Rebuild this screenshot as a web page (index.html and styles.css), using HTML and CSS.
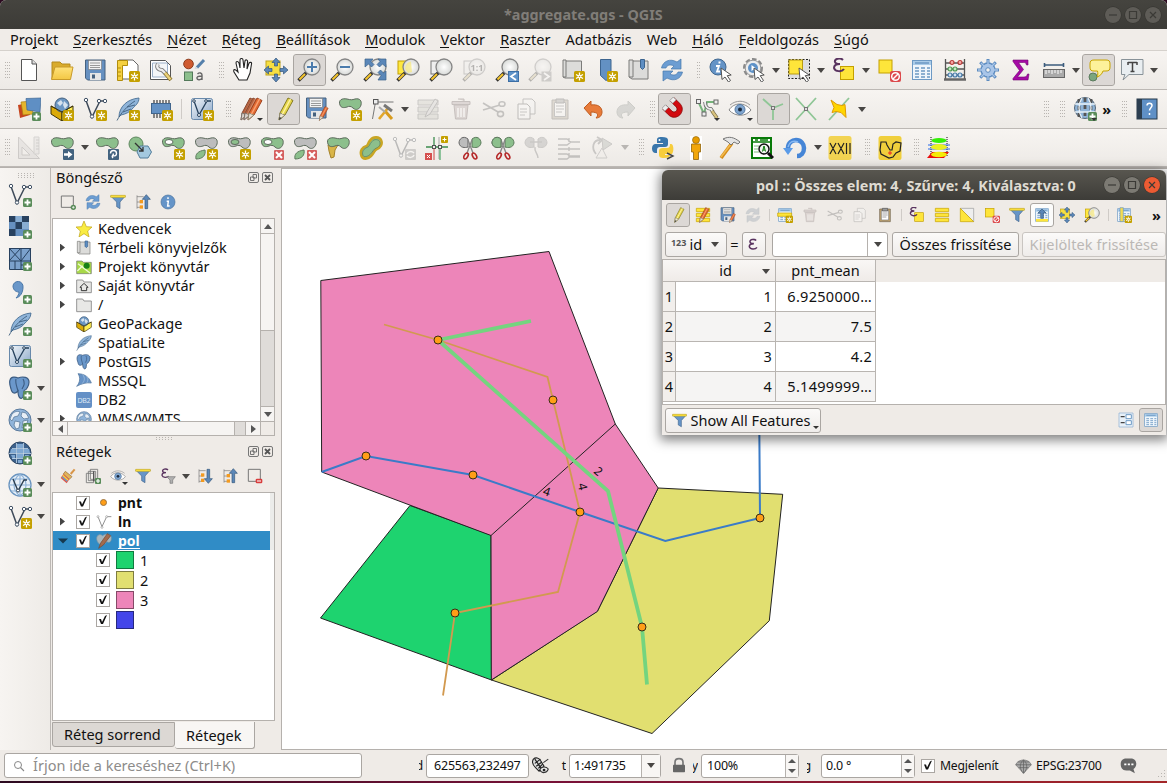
FILE: index.html
```html
<!DOCTYPE html>
<html lang="hu">
<head>
<meta charset="utf-8">
<title>*aggregate.qgs - QGIS</title>
<link rel="stylesheet" href="styles.css">
</head>
<body>
<svg class="defs" aria-hidden="true">
  <defs>
    <linearGradient id="gBlue" x1="0" y1="0" x2="1" y2="1"><stop offset="0" stop-color="#f4f7fa"/><stop offset="1" stop-color="#88a6c8"/></linearGradient>
    <radialGradient id="gLens"><stop offset="0" stop-color="#fff"/><stop offset="1" stop-color="#d8dad8"/></radialGradient>
    <linearGradient id="gFold" x1="0" y1="0" x2="0" y2="1"><stop offset="0" stop-color="#ffe27a"/><stop offset="1" stop-color="#f3c744"/></linearGradient>
  </defs>
  <!-- badges -->
  <symbol id="bn" viewBox="0 0 24 24"><rect x="13" y="13" width="11" height="11" rx="1.500" fill="#c4a000"/><path d="M18.500 14.500v8M15 16.500l7 4M22 16.500l-7 4" stroke="#fff" stroke-width="1.300"/><circle cx="18.500" cy="18.500" r="1.700" fill="#fff"/><circle cx="18.500" cy="18.500" r=".8" fill="#c4a000"/></symbol>
  <symbol id="bp" viewBox="0 0 24 24"><rect x="15" y="15" width="9" height="9" rx="1.500" fill="#5a8c5a"/><path d="M19.500 16.500v6M16.500 19.500h6" stroke="#fff" stroke-width="1.800"/></symbol>
  <symbol id="bx" viewBox="0 0 24 24"><rect x="14" y="14" width="10" height="10" rx="1" fill="#d5605f"/><path d="M16 16l6 6M22 16l-6 6" stroke="#fff" stroke-width="2"/></symbol>
  <symbol id="mag" viewBox="0 0 24 24"><path d="M1.500 22.500L10 14" stroke="#333" stroke-width="3.400"/><path d="M2.500 21.500L8 16" stroke="#f5c52c" stroke-width="2"/><circle cx="15" cy="9" r="8" fill="url(#gLens)" stroke="#858585" stroke-width="1.300"/></symbol>
  <symbol id="cur" viewBox="0 0 24 24"><path d="M12 10l1 11.500 3-2.500 3.500 5 2-1.500-3.300-4.800 4-.7z" fill="#fff" stroke="#555"/></symbol>
  <symbol id="blob" viewBox="0 0 24 24"><path d="M2 8C0 3 4 1 9 2c4 1 5 1 8 0 5-1 7 2 6 6-1 4-5 6-8 3-2-2-4-2-6-1-3 1-6 1-7-2z" stroke="#5d6b5d"/></symbol>
  <symbol id="vec" viewBox="0 0 24 24"><path d="M3 3.500L9 20l8-16M17 4h5" fill="none" stroke="#3f4b5a" stroke-width="1.500"/><g fill="#fff" stroke="#3f5064"><circle cx="3" cy="3" r="1.700"/><circle cx="9" cy="19.500" r="1.700"/><circle cx="16" cy="4" r="1.700"/><circle cx="22" cy="4" r="1.700"/></g></symbol>
  <symbol id="feather" viewBox="0 0 24 24"><path d="M3 20C3 10 11 2 23 1c0 5-4 8-6 10-3 4-7 6-12 7z" fill="#8fb4d9" stroke="#4a6f94" stroke-width=".9"/><path d="M1 23.500C5 16 11 9 19 4M7 15l8-3M11 10l8-2" fill="none" stroke="#3f607f" stroke-width=".9"/></symbol>
  <symbol id="globe" viewBox="0 0 24 24"><circle cx="12" cy="12" r="11" fill="#8fb4da" stroke="#5b7a9c"/><path d="M4 6c3-3 6-3 8-2l-2 4-4 1-2 4-2-2zM14 4l4 1 3 5-5 1-3-3zM7 13l5 1-1 6-3 1-2-4zM15 13l5-1-2 6-4 2z" fill="#e6eef6" stroke="#5d7c9c" stroke-width=".8"/></symbol>
  <symbol id="grid" viewBox="0 0 24 24"><circle cx="12" cy="12" r="11" fill="#e8f0f8" stroke="#6a94bf" stroke-width="1.300"/><path d="M1 12h22M3 6h18M3 18h18M12 1v22M12 1c-8 6-8 16 0 22M12 1c8 6 8 16 0 22" fill="none" stroke="#8ab0d6" stroke-width="1.100"/></symbol>
  <symbol id="pencil" viewBox="0 0 24 24"><path d="M7 23l1-7L16 1l5 2.500L13 18z" fill="#e5d64a" stroke="#857a24"/><path d="M7 23l1-7 5 2z" fill="#eee8d8" stroke="#8d8770"/><path d="M10.500 17L18.500 2" stroke="#fff2a0" stroke-width="1.500"/><path d="M7 23l.6-3 2 1z" fill="#333"/></symbol>
  <symbol id="rpencil" viewBox="0 0 24 24"><path d="M7 23l1-7L16 1l5 2.500L13 18z" fill="#e26a32" stroke="#9d4320"/><path d="M7 23l1-7 5 2z" fill="#e6ddd2" stroke="#8d8770"/><path d="M10.500 17L18.500 2" stroke="#f9a070" stroke-width="1.500"/></symbol>
  <symbol id="bpencil" viewBox="0 0 24 24"><path d="M7 23l1-7L16 1l5 2.500L13 18z" fill="#b5623f" stroke="#8a4a30"/><path d="M7 23l1-7 5 2z" fill="#d8d0c8" stroke="#7d7770"/><path d="M10.500 17L18.500 2" stroke="#cf8a6b" stroke-width="1.500"/></symbol>
  <symbol id="floppy" viewBox="0 0 24 24"><path d="M2.500 2h19.500v20H4.500l-2-2z" fill="#6690c0" stroke="#45617f"/><rect x="5.500" y="2.500" width="13" height="9" fill="#f2f2f2" stroke="#777" stroke-width=".6"/><path d="M7 5h10M7 7.500h10M7 9.500h10" stroke="#999"/><path d="M7 15h11v7H7z" fill="#e6e6e6"/><path d="M9 16.500h3v4H9z" fill="#45617f"/></symbol>
  <symbol id="table" viewBox="0 0 24 24"><rect x="2.500" y="2.500" width="19" height="19" fill="#eef5fb" stroke="#6c99c4"/><path d="M3 3h18v4H3z" fill="#a9cbe8"/><path d="M5 10h4M11 10h4M17 10h3M5 13h4M11 13h4M17 13h3M5 16h4M11 16h4M17 16h3M5 19h4M11 19h4M17 19h3M5 5h14" stroke="#6c99c4" stroke-width="1.300"/></symbol>
  <!-- project -->
  <symbol id="new" viewBox="0 0 24 24"><path d="M4.500 1.500h10.500l4.500 4.500v16.500h-15z" fill="#fff" stroke="#555"/><path d="M15 1.500V6h4.500" fill="#ddd" stroke="#555"/></symbol>
  <symbol id="open" viewBox="0 0 24 24"><path d="M2 21V4h8l2 2h8v4" fill="#d9ab2b" stroke="#b48a1e"/><path d="M1.500 21.500L5 9h18l-2.500 12.500z" fill="url(#gFold)" stroke="#c89a2a"/></symbol>
  <symbol id="layout" viewBox="0 0 24 24"><path d="M3 2h14l5 5v14H3z" fill="#fff" stroke="#666"/><path d="M1.500 2.500h10v5h-5v15h-5z" fill="#f5d040" stroke="#b18d0d"/><path d="M2 10h3M2 14h3M2 18h3" stroke="#b18d0d"/><use href="#bn"/></symbol>
  <symbol id="lman" viewBox="0 0 24 24"><path d="M1.500 2.500h15l5 5v14h-20z" fill="#fff" stroke="#555"/><path d="M3.500 5h15v14h-15z" fill="#f4f6f8" stroke="#9cb0c8"/><path d="M9 6c-2 3 0 6 4 6l4 4" fill="none" stroke="#777" stroke-width="4"/><path d="M9 6c-2 3 0 6 4 6l3.500 3.500" fill="none" stroke="#eee" stroke-width="2.300"/><path d="M16 15l6 7" stroke="#8a7430" stroke-width="4"/><path d="M16 15l5.500 6.500" stroke="#ecd27a" stroke-width="2.400"/></symbol>
  <symbol id="style" viewBox="0 0 24 24"><circle cx="6.500" cy="6" r="4.800" fill="#cf5b30" stroke="#8d3d1f"/><path d="M15 9.500l7-7.500" stroke="#5580ab" stroke-width="3"/><path d="M12.500 11l4-.5-3-2z" fill="#cfd7df"/><rect x="2.500" y="14" width="8" height="8.500" fill="#8cbf8c" stroke="#53795a"/><path d="M15.500 16c2-2 4.500-1 4.500 1v5M20 18c-4 0-5.500 1-5 2.500.5 2 4 1.500 5-.5" fill="none" stroke="#666" stroke-width="1.400"/></symbol>
  <!-- navigation -->
  <symbol id="hand" viewBox="0 0 24 24"><path d="M8 22L3 14c-1-3 1-3 3-1l1 1L5 5c0-2 2-2 3 0l1 5V2c0-2 3-2 3 0l1 8 1-7c.5-2 3-1 2.500 1L16 11l2-6c1-1 3-1 2.500 1L19 15l-3 7z" fill="#fff" stroke="#222" stroke-width="1.100"/></symbol>
  <symbol id="pan" viewBox="0 0 24 24"><rect x="2" y="3" width="14" height="14" fill="#f6df42" stroke="#bfa31a"/><path d="M12 0l4 4.500h-2.500V8h-3V4.500H8zM12 24l4-4.500h-2.500V16h-3v3.500H8zM0 12l4.500-4v2.500H8v3H4.500V16zM24 12l-4.500-4v2.500H16v3h3.500V16z" fill="#5b87b8" stroke="#34567a" stroke-width=".7"/></symbol>
  <symbol id="zin" viewBox="0 0 24 24"><use href="#mag"/><path d="M15 4v10M10 9h10" stroke="#4b7cad" stroke-width="2"/></symbol>
  <symbol id="zout" viewBox="0 0 24 24"><use href="#mag"/><path d="M10 9h10" stroke="#4b7cad" stroke-width="2"/></symbol>
  <symbol id="zfull" viewBox="0 0 24 24"><use href="#mag"/><g fill="#5b87b8" stroke="#3b6289" stroke-width=".7"><path d="M2 1h8L8 3.500l3 3-2.500 2.500-3-3L2 9z"/><path d="M23 1h-8l2 2.500-3 3L16.500 9l3-3L23 9z"/><path d="M23 22v-9l-2.500 2-3-3-2.500 2.500 3 3L15 22z"/></g></symbol>
  <symbol id="zsel" viewBox="0 0 24 24"><rect x="2" y="3" width="14" height="13" fill="#ffe840" stroke="#c4a000"/><use href="#mag"/><path d="M15 3.500A7 7 0 0 0 9 11l3 4 4-1z" fill="#f5e98a" opacity=".8"/></symbol>
  <symbol id="zlay" viewBox="0 0 24 24"><rect x="2" y="3" width="14" height="13" fill="#eee" stroke="#777"/><use href="#mag"/></symbol>
  <symbol id="zprev" viewBox="0 0 24 24"><use href="#mag"/><rect x="13.500" y="13.500" width="10" height="10" fill="#5e92c8" stroke="#3b6ea5"/><path d="M21 15l-5 3.500 5 3.500" fill="none" stroke="#fff" stroke-width="1.800"/></symbol>
  <symbol id="znext" viewBox="0 0 24 24"><use href="#mag"/><rect x="13.500" y="13.500" width="10" height="10" fill="#888"/><path d="M16 15l5 3.500-5 3.500" fill="none" stroke="#fff" stroke-width="1.800"/></symbol>
  <symbol id="mapnew" viewBox="0 0 24 24"><path d="M2 2h3v17H2zM5 3h15.500v17H4L2 19" fill="#dcdcda" stroke="#7b7b79"/><use href="#bn"/></symbol>
  <symbol id="bmnew" viewBox="0 0 24 24"><path d="M6.500 1.500h10.500v18l-5 3-5.500-5z" fill="#6391c3" stroke="#3c648f"/><use href="#bn"/></symbol>
  <symbol id="bm" viewBox="0 0 24 24"><path d="M2 2h4v17H2zM6 3h15v18H5l-3-2" fill="#dcdcda" stroke="#7b7b79"/><path d="M13.500 1.500h4v8l-2 2-2-2z" fill="#5e8ec2" stroke="#3c648f"/></symbol>
  <symbol id="refresh" viewBox="0 0 24 24"><path d="M1.500 10C3 3 10 0 17 4l4-3v10H11l3-3c-4-2-7-1-8 2z" fill="#6c9dd2" stroke="#4679ad" stroke-width=".7"/><path d="M22.500 14C21 21 14 24 7 20l-4 3V13h10l-3 3c4 2 7 1 8-2z" fill="#6c9dd2" stroke="#4679ad" stroke-width=".7"/></symbol>
  <!-- attributes -->
  <symbol id="ident" viewBox="0 0 24 24"><circle cx="9" cy="9" r="8" fill="#6493c6" stroke="#41678f"/><path d="M9.500 4.500h2M7 8h3l-2 5.500h3" fill="none" stroke="#fff" stroke-width="1.800"/><use href="#cur"/></symbol>
  <symbol id="action" viewBox="0 0 24 24"><circle cx="11" cy="10" r="8.800" fill="none" stroke="#8a8a8a" stroke-width="2.400" stroke-dasharray="4.500 2.200"/><circle cx="11" cy="10" r="7.800" fill="#ededed" stroke="#999"/><circle cx="11" cy="10" r="5" fill="#5e92c8"/><path d="M9.500 7v6l4-3z" fill="#fff"/><use href="#cur"/></symbol>
  <symbol id="select" viewBox="0 0 24 24"><rect x="1.500" y="1.500" width="21" height="19" fill="#ddd" stroke="#222" stroke-dasharray="2 1.500"/><rect x="2" y="2" width="13.500" height="14" fill="#fee53a" stroke="#b89b10"/><use href="#cur"/></symbol>
  <symbol id="eps" viewBox="0 0 24 24"><path d="M12 3C9 0 3 2 4 5c.5 2 3 2 5 2-3 0-6 1-6 4 1 4 8 4 10 1" fill="none" stroke="#59335f" stroke-width="2"/></symbol>
  <symbol id="selexp" viewBox="0 0 24 24"><rect x="8.500" y="8.500" width="13" height="13" fill="#fee53a" stroke="#c4a000"/><use href="#eps" x="-1" y="-1"/></symbol>
  <symbol id="desel" viewBox="0 0 24 24"><rect x="2" y="2" width="13" height="13" fill="#fee53a" stroke="#c4a000"/><rect x="13" y="13" width="11" height="11" rx="2" fill="#dc4a4c"/><circle cx="18.500" cy="18.500" r="3.800" fill="none" stroke="#fff" stroke-width="1.500"/><path d="M16 21l5-5" stroke="#fff" stroke-width="1.500"/></symbol>
  <symbol id="abacus" viewBox="0 0 24 24"><path d="M2.500 1v20M21.500 1v20M3 5h18M3 11h18M3 17h18" stroke="#555" stroke-width="1.300" fill="none"/><path d="M1 21.500h22" stroke="#666" stroke-width="2.500"/><g stroke-width="1.200"><g fill="#f3a6a4" stroke="#b93a38"><circle cx="9" cy="4.500" r="2"/><circle cx="17" cy="4.500" r="2"/></g><g fill="#c3e6c3" stroke="#4f9a55"><circle cx="7" cy="11" r="2"/><circle cx="12" cy="11" r="2"/></g><g fill="#cfe0f0" stroke="#467aa8"><circle cx="7" cy="17" r="2"/><circle cx="12" cy="17" r="2"/><circle cx="17" cy="17" r="2"/></g></g></symbol>
  <symbol id="gear" viewBox="0 0 24 24"><path d="M12 1v22M1 12h22M4.200 4.200l15.600 15.600M19.800 4.200L4.200 19.800" stroke="#5d8cc0" stroke-width="3"/><circle cx="12" cy="12" r="7" fill="#a9c5e8" stroke="#5d8cc0" stroke-width="1.300"/><path d="M12 2v5M12 17v5M2 12h5M17 12h5M5 5l3 3M16 16l3 3M19 5l-3 3M5 19l3-3" stroke="#a9c5e8" stroke-width="1.300"/><circle cx="12" cy="12" r="2.300" fill="#f3f1ee" stroke="#5d8cc0"/></symbol>
  <symbol id="sigma" viewBox="0 0 24 24"><path d="M4 2h15v5h-1.500c-.5-2-1-2.500-3-2.500H9.500l5 7-6 7.500H15c2 0 3-1 3.500-3H20l-1 6H4v-1.500l6.500-8L4 3.500z" fill="#a50aa5" stroke="#700870" stroke-width=".6"/></symbol>
  <symbol id="meas" viewBox="0 0 24 24"><path d="M2 7h20M2.500 5v4M21.500 5v4" stroke="#3b5b7c" stroke-width="1.600"/><rect x="1.500" y="11.500" width="21" height="8" fill="#aaa" stroke="#666"/><path d="M4 12v4M7 12v3M10 12v4M13 12v3M16 12v4M19 12v3" stroke="#fff"/></symbol>
  <symbol id="tips" viewBox="0 0 24 24"><circle cx="6" cy="19" r="4" fill="#7ba67e" stroke="#5b7b5e"/><path d="M7 2h12c3 0 4 1 4 4v3c0 3-1 4-4 4h-3c-1 3-3 5-6 6 1-2 1-4 .5-6H7c-3 0-4-1-4-4V6c0-3 1-4 4-4z" fill="#fdf29a" stroke="#c8a400"/></symbol>
  <symbol id="annot" viewBox="0 0 24 24"><path d="M1.500 1.500h21.500v15h-14L3 22l2-5.500H1.500z" fill="#e9eef1" stroke="#889298"/><path d="M8 4.500h9M8 4v3M17 4v3M12.500 4.500v9M10.500 13.500h4" stroke="#444" stroke-width="1.500"/></symbol>
  <!-- data sources -->
  <symbol id="dsm" viewBox="0 0 24 24"><path d="M1 8l10-2 2 12-10 3z" fill="#c6441e"/><path d="M4 5l11-1 1 13-10 1z" fill="#e5b52c" stroke="#ad7e12" stroke-width=".7"/><path d="M9 1.500l15-.5-1 14-13-2z" fill="#5f8fc4" stroke="#416894" stroke-width=".7"/><use href="#bp"/></symbol>
  <symbol id="gpkg" viewBox="0 0 24 24"><path d="M1 9l11 6v9L1 17z" fill="#dbaa08" stroke="#3f3408"/><path d="M23 9l-11 6v9l11-7z" fill="#ffee55" stroke="#3f3408"/><circle cx="12" cy="8" r="7" fill="#6b96c2" stroke="#45617f"/><path d="M7 6l4-3 2 3-3 3zM14 4l4 4-3 4-2-4z" fill="#d6e2ee"/><path d="M1 9l11 6 11-6" fill="none" stroke="#3f3408"/></symbol>
  <symbol id="gpkgn" viewBox="0 0 24 24"><use href="#gpkg"/><use href="#bn"/></symbol>
  <symbol id="vecn" viewBox="0 0 24 24"><use href="#vec"/><use href="#bn"/></symbol>
  <symbol id="vecp" viewBox="0 0 24 24"><use href="#vec"/><use href="#bp"/></symbol>
  <symbol id="feathern" viewBox="0 0 24 24"><use href="#feather"/><use href="#bn"/></symbol>
  <symbol id="featherp" viewBox="0 0 24 24"><use href="#feather"/><use href="#bp"/></symbol>
  <symbol id="chip" viewBox="0 0 24 24"><path d="M5 3v18M8 3v18M11 3v18M14 3v18M17 3v18M20 3v18" stroke="#4a4a4a" stroke-width="1.300"/><rect x="2.500" y="6.500" width="19" height="10" fill="#6391c4" stroke="#41658c"/><use href="#bn"/></symbol>
  <symbol id="virt" viewBox="0 0 24 24"><rect x="1.500" y="1.500" width="21" height="21" rx="2" fill="url(#gBlue)" stroke="#6889ab"/><path d="M4 4l5 14 8-14h4" fill="none" stroke="#26415c" stroke-width="1.300"/><g fill="#fff" stroke="#26415c"><circle cx="4" cy="4" r="1.300"/><circle cx="9" cy="18" r="1.500"/><circle cx="16" cy="4" r="1.300"/></g></symbol>
  <symbol id="virtn" viewBox="0 0 24 24"><use href="#virt"/><use href="#bn"/></symbol>
  <symbol id="virtp" viewBox="0 0 24 24"><use href="#virt"/><use href="#bp"/></symbol>
  <!-- editing -->
  <symbol id="edits" viewBox="0 0 24 24"><use href="#bpencil" x="-5" y="0"/><use href="#bpencil" x="-2" y="0"/><use href="#rpencil" x="2" y="0"/></symbol>
  <symbol id="savee" viewBox="0 0 24 24"><use href="#floppy" x="-1" y="-1"/><use href="#rpencil" x="10" y="9" width="15" height="15"/></symbol>
  <symbol id="addpol" viewBox="0 0 24 24"><use href="#blob" fill="#8cbf8c"/><use href="#bn"/></symbol>
  <symbol id="vtool" viewBox="0 0 24 24"><path d="M1.500 22L4.500 5h18" fill="none" stroke="#777"/><rect x="2.500" y="2.500" width="4.500" height="4.500" fill="#eee" stroke="#555"/><path d="M14 14l7 8" stroke="#d89b1c" stroke-width="3"/><path d="M8 22L17 11" stroke="#e0a62c" stroke-width="2.600"/><path d="M13 8l8 6" stroke="#777" stroke-width="3"/><path d="M8 10l6 5" stroke="#aaa" stroke-width="2"/></symbol>
  <symbol id="modat" viewBox="0 0 24 24"><g fill="#c9ccae" stroke="#777"><path d="M2 3h20v5H2zM2 10h20v5H2zM2 17h20v5H2z"/></g><path d="M9 20l2-5 8-13 3 2-8 13z" fill="#ccc" stroke="#666"/></symbol>
  <symbol id="bin" viewBox="0 0 24 24"><path d="M5 8h14l-1.500 14h-11z" fill="#cf9b9b" stroke="#815858"/><path d="M9 11v9M12 11v9M15 11v9" stroke="#fff" stroke-width="1.500"/><path d="M3 4.500h18v3H3zM9 2h6v2" fill="#cf9b9b" stroke="#815858"/></symbol>
  <symbol id="cut" viewBox="0 0 24 24"><path d="M1 6l15 9M1 13l17-5" stroke="#666" stroke-width="1.700"/><g fill="none" stroke="#666" stroke-width="1.600"><ellipse cx="20" cy="7" rx="3" ry="2.300"/><ellipse cx="18.500" cy="17" rx="3" ry="2.600"/></g></symbol>
  <symbol id="copy" viewBox="0 0 24 24"><path d="M8 2h9l3 3v12H8z" fill="#f8f8f8" stroke="#666"/><path d="M3 7h9l3 3v12H3z" fill="#fff" stroke="#555"/><path d="M5 12h7M5 15h7M5 18h5" stroke="#777"/></symbol>
  <symbol id="paste" viewBox="0 0 24 24"><path d="M4 3h16v19H4z" fill="#c7a66c" stroke="#6d6250"/><path d="M6.500 5.500h11v14h-11z" fill="#fff" stroke="#777"/><path d="M8 9h8M8 12h8M8 15h6" stroke="#777"/><path d="M8 2h8v4H8z" fill="#999" stroke="#555"/></symbol>
  <symbol id="undo" viewBox="0 0 24 24"><path d="M3 11l7-7v4c7-1 11 2 11 7 0 3-2 6-6 6 3-3 2-6-5-6v4z" fill="#e87b3a" stroke="#bf5c20"/></symbol>
  <symbol id="redo" viewBox="0 0 24 24"><path d="M21 11l-7-7v4c-7-1-11 2-11 7 0 3 2 6 6 6-3-3-2-6 5-6v4z" fill="#9aa79a" stroke="#788878"/></symbol>
  <symbol id="magnet" viewBox="0 0 24 24"><g transform="rotate(-45 12 12)"><path d="M4 4v8c0 11 16 11 16 0V4h-5v8c0 4-6 4-6 0V4z" fill="#d20b10" stroke="#8a0808" stroke-width=".8"/><path d="M4 3h5v4H4zM15 3h5v4h-5z" fill="#eee" stroke="#999" stroke-width=".8"/></g></symbol>
  <symbol id="topo" viewBox="0 0 24 24"><path d="M3 4l6 13 3-12h10" fill="none" stroke="#76b37b" stroke-width="2"/><g fill="#eee" stroke="#666"><rect x="1.500" y="2.500" width="4" height="4"/><rect x="7" y="15" width="4" height="4"/><rect x="19" y="3" width="4" height="4"/></g><path d="M10 5c0 5 3 7 6 7l2 3" fill="none" stroke="#666" stroke-width="3.500"/><path d="M10 5c0 5 3 7 6 7l2 3" fill="none" stroke="#eee" stroke-width="2"/><path d="M17 14l5 7" stroke="#6d6440" stroke-width="3.600"/><path d="M17 14l5 7" stroke="#d7c17d" stroke-width="2.200"/></symbol>
  <symbol id="eye" viewBox="0 0 24 24"><path d="M1 13C6 5 17 5 23 13c-5 7-16 7-22 0z" fill="#fff" stroke="#888"/><path d="M2 8C8 3 16 3 22 8" fill="none" stroke="#999"/><circle cx="12" cy="12.500" r="5" fill="#7fa5cf" stroke="#5478a0"/><circle cx="12" cy="12.500" r="2" fill="#1c2a3c"/></symbol>
  <symbol id="snapa" viewBox="0 0 24 24"><path d="M2 2l10 9 10-4M12 11v12" fill="none" stroke="#8fc696" stroke-width="1.800"/><rect x="10.500" y="9.500" width="3" height="3" fill="#ddd" stroke="#777"/></symbol>
  <symbol id="snapx" viewBox="0 0 24 24"><path d="M2 1l20 22M22 1L2 23" stroke="#8fc696" stroke-width="1.800"/><rect x="10.500" y="10.500" width="3" height="3" fill="#ddd" stroke="#777"/></symbol>
  <symbol id="snapt" viewBox="0 0 24 24"><path d="M22 1L2 23" stroke="#8fc696" stroke-width="1.800"/><path d="M4 3l6 4.500 5 1 3-1 1 13-5-5-5-1-4 1 2-5z" fill="#ffd500" stroke="#e09c00"/></symbol>
  <symbol id="wms" viewBox="0 0 24 24"><circle cx="12" cy="11" r="10.500" fill="#8fb4d8" stroke="#567"/><path d="M6 2v18M12 1v20M18 2v18" stroke="#555" stroke-width="2.800" stroke-dasharray="4 3"/><path d="M2 7h20M2 15h20M9 1c-4 6-4 14 0 20M15 1c4 6 4 14 0 20" fill="none" stroke="#e8f1f8" stroke-width="1.300"/><use href="#bp"/></symbol>
  <symbol id="help" viewBox="0 0 24 24"><rect x="2" y="2" width="20" height="20" fill="#5f90c6" stroke="#263848"/><path d="M2 2h5v20H2z" fill="#2c3e50"/><path d="M12 8.500c0-3 5-3 5 0 0 2-2.500 2.500-2.500 5M14.500 16v2" fill="none" stroke="#fff" stroke-width="1.500"/></symbol>
  <!-- advanced digitising -->
  <symbol id="cad" viewBox="0 0 24 24"><path d="M1.500 1v21.500h21zM5 11l8 8H5z" fill="#d8cccb" stroke="#8d8181" fill-rule="evenodd"/><path d="M17 1h5v17h-5z" fill="#ded6d4" stroke="#999"/><path d="M19 4h3M19 7h3M19 10h3M19 13h3" stroke="#888"/></symbol>
  <symbol id="movef" viewBox="0 0 24 24"><use href="#blob" fill="#8cbf8c"/><rect x="13" y="13" width="11" height="11" rx="1" fill="#43637f"/><path d="M14 17.300h4V15l4.500 3.500L18 22v-2.300h-4z" fill="#fff"/></symbol>
  <symbol id="rotf" viewBox="0 0 24 24"><use href="#blob" fill="#8cbf8c"/><rect x="13" y="13" width="11" height="11" rx="1" fill="#43637f"/><path d="M15.500 17.500c0-4 6-4 6 0 0 2-2 3-3.500 2l.5-2M18 22c-1-1-1-2 0-3" fill="none" stroke="#fff" stroke-width="1.400"/></symbol>
  <symbol id="simp" viewBox="0 0 24 24"><circle cx="8" cy="8" r="7" fill="#8cbf8c" stroke="#5f885f"/><path d="M12 10h8l3.500 6-3.500 6h-8l-3-6z" fill="#a3c8df" stroke="#537d9a"/><path d="M7 7l8 8M15 11v4h-4" fill="none" stroke="#333" stroke-width="1.300"/></symbol>
  <symbol id="ringn" viewBox="0 0 24 24"><use href="#blob" fill="#8cbf8c"/><ellipse cx="8" cy="6" rx="4" ry="2.500" fill="#fff" stroke="#5d6b5d"/><use href="#bn"/></symbol>
  <symbol id="partn" viewBox="0 0 24 24"><use href="#blob" fill="#bdbdbd"/><path d="M2 23c-1-5 2-8 9-9 1 5-2 9-9 9z" fill="#8cbf8c" stroke="#5d7b5d"/><use href="#bn"/></symbol>
  <symbol id="filln" viewBox="0 0 24 24"><use href="#blob" fill="#bdbdbd"/><ellipse cx="8" cy="6" rx="4" ry="2.500" fill="#8cbf8c" stroke="#5d6b5d"/><use href="#bn"/></symbol>
  <symbol id="ringx" viewBox="0 0 24 24"><use href="#blob" fill="#8cbf8c"/><ellipse cx="8" cy="6" rx="4" ry="2.500" fill="#fff" stroke="#5d6b5d"/><use href="#bx"/></symbol>
  <symbol id="partx" viewBox="0 0 24 24"><use href="#blob" fill="#bdbdbd"/><path d="M2 23c-1-5 2-8 9-9 1 5-2 9-9 9z" fill="#8cbf8c" stroke="#5d7b5d"/><use href="#bx"/></symbol>
  <symbol id="reshape" viewBox="0 0 24 24"><path d="M2 9h10l-3 5-1 7-3 1-2-7z" fill="#d9b548" stroke="#a5822a"/><use href="#blob" fill="#8cbf8c"/></symbol>
  <symbol id="offset" viewBox="0 0 24 24"><path d="M2.500 20c-2-5 1-9 5-10 2-1 1-3 4-6 3-4 9-3 10.500 0 2 4-1 8-4 9-3 1-2 3-6 7-3 3-8 4-9.500 0z" fill="#8cbf8c" stroke="#c9a624" stroke-width="2.600"/><path d="M4 19.500c-1.500-4 1-7 4-8 3-1 2-3 5-6 2-3 7-2 7.500 0 1.500 3-.5 5.500-3 6.500-3 1-3 3-6.500 6.500-2 2-6 3-7 1z" fill="none" stroke="#5d7b5d" stroke-width=".7"/></symbol>
  <symbol id="revl" viewBox="0 0 24 24"><use href="#vec"/><rect x="13" y="13" width="11" height="11" rx="1" fill="#888"/><path d="M15 18c1-3 5-3 7-1M22 19c-1 3-5 3-7 1" stroke="#fff" stroke-width="1.500" fill="none"/></symbol>
  <symbol id="trim" viewBox="0 0 24 24"><path d="M9 1v9M1 11h22" stroke="#3c8c4e" stroke-width="1.300"/><path d="M9 11v13" stroke="#d34545"/><path d="M14 1v22" stroke="#777" stroke-width=".6"/><path d="M15 12v12" stroke="#6db480" stroke-width="1.500"/><g fill="#eee" stroke="#555"><rect x="7.500" y="9.500" width="3" height="3"/><rect x="13.500" y="9.500" width="3" height="3"/></g><rect x="0" y="17" width="7" height="7" fill="#d5504f"/><path d="M2 19l3 3M5 19l-3 3" stroke="#fff"/><rect x="16" y="0" width="7" height="7" rx="1" fill="#c4a000"/><path d="M19.500 1.500v4M17.500 3.500h4" stroke="#fff"/></symbol>
  <symbol id="splf" viewBox="0 0 24 24"><path d="M10 3C5-1 1 3 1 7c1 5 6 5 9 4z" fill="#bcbcbc" stroke="#666"/><path d="M14 3c5-4 9 0 9 4-1 5-6 5-9 4z" fill="#8cbf8c" stroke="#5d7b5d"/><path d="M10 4l5 13M14 4L9 17" stroke="#888" stroke-width="1.400"/><g fill="none" stroke="#b62b2b" stroke-width="1.700"><ellipse cx="8" cy="20" rx="1.800" ry="3.200" transform="rotate(30 8 20)"/><ellipse cx="16.500" cy="20" rx="1.800" ry="3.200" transform="rotate(-30 16.500 20)"/></g></symbol>
  <symbol id="splp" viewBox="0 0 24 24"><use href="#splf"/><path d="M10 3C5-1 1 3 1 7c1 5 6 5 9 4z" fill="#8cbf8c" stroke="#5d7b5d"/></symbol>
  <symbol id="mrg" viewBox="0 0 24 24"><path d="M10 3C5-1 1 3 1 7c1 5 6 5 9 4zM14 3c5-4 9 0 9 4-1 5-6 5-9 4z" fill="#9a9a9a" stroke="#777"/><path d="M6 6h12M11 11c-1 5 3 6 3 11" fill="none" stroke="#777" stroke-width="1.500"/></symbol>
  <symbol id="mrga" viewBox="0 0 24 24"><path d="M1 3h9l4 3h9M1 9h9l4-3M1 13h22M1 18h9l4 3h9M1 23h9l4-3h9M12 2v4M12 11v4M12 17v4" fill="none" stroke="#666" stroke-width="1.400"/></symbol>
  <symbol id="rots" viewBox="0 0 24 24"><path d="M6 18C1 12 3 4 10 4M7 1l5 3-4 4" fill="none" stroke="#777" stroke-width="1.800"/><path d="M12 2l10 6-9 6z" fill="#9bae9b" stroke="#777"/><path d="M6 22l6-10 5 10z" fill="none" stroke="#888"/></symbol>
  <!-- plugins -->
  <symbol id="python" viewBox="0 0 24 24"><path d="M11 1C6 1 6 2 6 5v2h6v1H4c-4 0-4 9 0 9h2v-3c0-2 1-3 3-3h5c2 0 3-1 3-3V4c0-2-2-3-6-3z" fill="#3a76ab"/><path d="M13 22c-4 0-5-1-5-4v-3c0-2 1-3 4-3h4c2 0 3-1 3-4h1c3 0 3 8 1 10h-7v1h5c0 2-2 3-6 3z" fill="#f7cd3c"/><circle cx="8.500" cy="4" r="1" fill="#fff"/><path d="M16 17l6 3-6 3" fill="none" stroke="#444" stroke-width="1.400"/></symbol>
  <symbol id="man" viewBox="0 0 24 24"><path d="M6 0h12v24H6z" fill="#fff"/><circle cx="12" cy="4" r="3.500" fill="#e79c00" stroke="#875a00" stroke-width=".6"/><path d="M7.500 8h9v8h-2v7.500h-5V16h-2z" fill="#f1a60a" stroke="#93640a" stroke-width=".8"/></symbol>
  <symbol id="hammer" viewBox="0 0 24 24"><path d="M4 22L15 7" stroke="#d58d19" stroke-width="3.600"/><path d="M4 21L14 8" stroke="#f2ba4e" stroke-width="1.500"/><path d="M6 3c6-3 11-2 17 3l-2 2-4-2-3 3-3-3z" fill="#e4e4e4" stroke="#777"/></symbol>
  <symbol id="grq" viewBox="0 0 24 24"><path d="M2 2h19v20H2z" fill="#fff" stroke="#087a08" stroke-width="2"/><path d="M2 6h19M5 4h3M10 4h8" stroke="#087a08" stroke-width="1.500"/><path d="M4 10h5M4 13h4M4 16h5" stroke="#7ebd7e"/><circle cx="14" cy="13" r="5" fill="#eff5ef" stroke="#111" stroke-width="1.500"/><path d="M18 17l5 5" stroke="#111" stroke-width="3"/><path d="M12.500 15.500L14 10l1.500 5.500M13 14h2" stroke="#087a08" fill="none"/></symbol>
  <symbol id="reload" viewBox="0 0 24 24"><path d="M5 12c0-5 4-8 8-8 5 0 8 4 8 8 0 5-3 8-7 8" fill="none" stroke="#4585d6" stroke-width="4.500"/><path d="M0 12h10l-5 7z" fill="#5a9be8"/><path d="M5 11c1-5 5-7 10-5" fill="none" stroke="#88b9f2" stroke-width="1.500"/></symbol>
  <symbol id="xxii" viewBox="0 0 24 24"><rect x=".5" y="0" width="23" height="24" rx="2.500" fill="#f2d352"/><path d="M2 7l6 11M8 7L2 18M10 7l6 11M16 7l-6 11M18.500 7v11M22 7v11" stroke="#222" stroke-width="1.200"/></symbol>
  <symbol id="country" viewBox="0 0 24 24"><rect x=".5" y="0" width="23" height="24" rx="2.500" fill="#f0cf3c"/><path d="M3 6h5l1 3 3 5h2l1-6 3-2 5 1-1 8-4 2-3 4-4 1-8-4-1-4z" fill="none" stroke="#222" stroke-width="1.200"/><path d="M12 15v4M10 17h4" stroke="#e22"/></symbol>
  <symbol id="stack" viewBox="0 0 24 24"><path d="M4 1v20M20 1v20" stroke="#111" stroke-dasharray="1 1"/><ellipse cx="12" cy="4.500" rx="7.500" ry="2.500" fill="#34ee08"/><path d="M1 13h22M1 9h22" stroke="#2869e8"/><ellipse cx="12" cy="11" rx="8" ry="3" fill="#eaf022"/><path d="M0 22l5-6h17l-5 6z" fill="#ea0d0d"/><ellipse cx="12" cy="18.500" rx="8" ry="2.800" fill="#f4ec0a"/></symbol>
  <!-- manage layers -->
  <symbol id="raster" viewBox="0 0 24 24"><path d="M1 1h20v20H1z" fill="#6690c0"/><path d="M1 1h6.500v6H1zM14 1h7v6h-7zM7.500 7H14v7H7.500zM1 14h6.500v7H1z" fill="#28415f"/><path d="M7.500 1H14v6H7.500zM14 7h7v7h-7z" fill="#88add3"/><use href="#bp"/></symbol>
  <symbol id="mesh" viewBox="0 0 24 24"><path d="M1.500 1.500h21v21h-21z" fill="#7ba1cc" stroke="#28415f"/><path d="M1 14h22M13 1v22M1 1l12 13M13 1L1 14M23 1L13 14M7 14v8M13 18h10" stroke="#28415f" fill="none"/><use href="#bp"/></symbol>
  <symbol id="comma" viewBox="0 0 24 24"><path d="M5 6a5 5 0 1 1 10 1c0 6-3 10-7 11 2-2 3-4 3-6-4 0-6-3-6-6z" fill="#6a97c9" stroke="#4a77a8"/><use href="#bp"/></symbol>
  <symbol id="pg" viewBox="0 0 24 24"><path d="M2 4C3 0 8 1 10 2c5-2 11-1 11 4 0 4-3 8-4 8-2 0-1 3-2 7-2 3-5 1-5-6-3 3-6 3-7-2C2 10 1 7 2 4z" fill="#6b98cb" stroke="#3c5c82" stroke-width="1.200"/><path d="M8 3c-1 4 1 8 2 12M15 3c2 3 1 7-1 10" fill="none" stroke="#3c5c82" stroke-width="1.100"/></symbol>
  <symbol id="pgp" viewBox="0 0 24 24"><use href="#pg"/><use href="#bp"/></symbol>
  <symbol id="globep" viewBox="0 0 24 24"><use href="#globe"/><use href="#bp"/></symbol>
  <symbol id="wcs" viewBox="0 0 24 24"><circle cx="12" cy="12" r="11" fill="#3c618c" stroke="#2c4664"/><path d="M3 8h5v4H2zM9 3h6v4H9zM16 8h5l1 4h-6zM9 13h6v4H9zM3 14h4v4H5zM10 19h4v3h-4zM17 14h4l-2 4h-2zM9 8h6v4H9z" fill="#7fa8d2"/><path d="M1 12.500h22M4 7.500h16M4 17.500h16M8.500 2v20M15.500 2v20" stroke="#c5d8ea" stroke-width=".8"/><use href="#bp"/></symbol>
  <symbol id="wfs" viewBox="0 0 24 24"><use href="#grid"/><path d="M5 6l5 12 6-11h3" fill="none" stroke="#2c3e50" stroke-width="1.400"/><circle cx="10" cy="17.500" r="1.500" fill="#fff" stroke="#2c3e50"/><use href="#bp"/></symbol>
  <!-- panels -->
  <symbol id="addl" viewBox="0 0 24 24"><path d="M2 3h18v17H2z" fill="none" stroke="#777" stroke-width="1.500"/><circle cx="20" cy="20" r="4" fill="#5a8c5a"/><path d="M20 18v4M18 20h4" stroke="#fff"/></symbol>
  <symbol id="reml" viewBox="0 0 24 24"><path d="M2 2h18v18H2z" fill="none" stroke="#777" stroke-width="1.500"/><rect x="13" y="16" width="10" height="7" rx="2" fill="#d83d3d"/><path d="M15 19.500h6" stroke="#fff" stroke-width="1.600"/></symbol>
  <symbol id="filter" viewBox="0 0 24 24"><path d="M1 3h22l-8 9v10l-5-3v-7z" fill="#6695c8" stroke="#42658c"/><path d="M1 2h22v3H1z" fill="#ffe33f" stroke="#c4a000" stroke-width=".7"/></symbol>
  <symbol id="coll" viewBox="0 0 24 24"><path d="M3 2v20M3 4h10M3 12h6M3 20h6" stroke="#777" fill="none"/><rect x="7" y="9" width="5" height="5" fill="#f39a1f"/><rect x="7" y="17" width="5" height="5" fill="#f39a1f"/><path d="M17 1l6 7h-4v14h-4V8h-4z" fill="#5b87b8" stroke="#34567a"/></symbol>
  <symbol id="expd" viewBox="0 0 24 24"><path d="M3 2v20M3 4h10M3 12h6M3 20h6" stroke="#777" fill="none"/><rect x="6" y="8" width="5" height="5" fill="#f39a1f"/><rect x="6" y="16" width="5" height="5" fill="#f39a1f"/><path d="M17 23l6-7h-4V2h-4v14h-4z" fill="#5b87b8" stroke="#34567a"/></symbol>
  <symbol id="info" viewBox="0 0 24 24"><circle cx="12" cy="12" r="10.500" fill="#6594c8" stroke="#47709c"/><path d="M12 5v2.500M10 11h2.500l-1 7h3" fill="none" stroke="#fff" stroke-width="2.200"/></symbol>
  <symbol id="star" viewBox="0 0 24 24"><path d="M12 0l3.500 8.500 8.500.5-6.500 6 2 9L12 19l-7.500 5 2-9L0 9l8.500-.5z" fill="#f9ec42" stroke="#bda012"/></symbol>
  <symbol id="projd" viewBox="0 0 24 24"><path d="M1 3h8l2 2h12v17H1z" fill="#a8d948" stroke="#777"/><path d="M3 7l18 14M2 18l8-8" stroke="#f0fbd8" stroke-width="2"/><circle cx="16" cy="10" r="4.500" fill="#168016"/></symbol>
  <symbol id="folder" viewBox="0 0 24 24"><path d="M1 3h9l2 3h11v16H1z" fill="#e8e8e6" stroke="#888" stroke-width="1.300"/></symbol>
  <symbol id="home" viewBox="0 0 24 24"><use href="#folder"/><path d="M6 14l6-6 6 6h-2v5H8v-5z" fill="none" stroke="#333" stroke-width="1.500"/></symbol>
  <symbol id="sail" viewBox="0 0 24 24"><path d="M3 1c9 0 17 5 20 14C16 14 8 16 1 20c5-6 6-13 2-19z" fill="#6692c6" stroke="#4a6f99"/><path d="M10 2c4 6 3 10-1 14M16 5c3 4 2 7 0 10" fill="none" stroke="#a9c5e2"/></symbol>
  <symbol id="brush" viewBox="0 0 24 24"><path d="M16 9l6-7" stroke="#d89548" stroke-width="3"/><path d="M8 5l10 8-4 4L5 9z" fill="#e0b45b" stroke="#936a38"/><path d="M5 9l9 8-4 6-9-8z" fill="#e25444"/><path d="M3 13l8 7" stroke="#6f9dca" stroke-width="2"/><path d="M4 11l8 7" stroke="#f4d64a" stroke-width="2"/></symbol>
  <symbol id="grp" viewBox="0 0 24 24"><path d="M2 8h11v14H2zM5 5h11v14H5zM8 2h11v15H8z" fill="#f1efec" stroke="#777" stroke-width="1.300"/><path d="M13 20V5" stroke="#555" stroke-width="2"/><use href="#bp"/></symbol>
  <symbol id="epsf" viewBox="0 0 24 24"><use href="#eps"/><path d="M10 13h13l-4 5v5h-4v-5z" fill="#b0b0b0" stroke="#777"/></symbol>
  <symbol id="lnico" viewBox="0 0 24 24"><path d="M3 4l6 15 7-15h7" fill="none" stroke="#888" stroke-width="1.400"/><g fill="#fff" stroke="#999"><circle cx="3" cy="4" r="1.500"/><circle cx="9" cy="20" r="1.500"/><circle cx="16" cy="4" r="1.500"/></g></symbol>
  <symbol id="polico" viewBox="0 0 24 24"><path d="M1 10C0 4 5 0 10 4c4-3 10-4 13 2 1 7-3 10-7 7-4 7-13 6-15-3z" fill="#a9b7bd" stroke="#6b8fa5"/><path d="M4 23l3-8L17 1l5 3L11 18z" fill="#a46b4d" stroke="#734630"/></symbol>
  <symbol id="rows" viewBox="0 0 24 24"><path d="M2 2h20v5H2zM2 9.500h20v5H2zM2 17h20v5H2z" fill="#fee53a" stroke="#c4a000"/></symbol>
  <symbol id="rowed" viewBox="0 0 24 24"><use href="#rows"/><use href="#rpencil"/></symbol>
  <symbol id="inv" viewBox="0 0 24 24"><path d="M2 2h20v20z" fill="#eee" stroke="#999"/><path d="M2 2v20h20z" fill="#fee53a" stroke="#c4a000"/></symbol>
  <symbol id="tabn" viewBox="0 0 24 24"><use href="#table"/><path d="M1 9h21v5H1z" fill="#fee53a" stroke="#c4a000"/><use href="#bn"/></symbol>
  <symbol id="top" viewBox="0 0 24 24"><use href="#table"/><path d="M3 18h18v4H3z" fill="#fee53a"/><path d="M12 3l6 6h-4v8h-4V9H6z" fill="#5b87b8" stroke="#34567a"/></symbol>
  <symbol id="coln" viewBox="0 0 24 24"><use href="#table"/><path d="M6 1h5v21H6z" fill="#f4dc50" stroke="#6c99c4"/><use href="#bn"/></symbol>
  <symbol id="form" viewBox="0 0 24 24"><path d="M1.500 1.500h21v21h-21z" fill="#e9f1f8" stroke="#88aed0"/><path d="M4 7h6M4 16h6" stroke="#444" stroke-width="2"/><path d="M12 4h8v6h-8zM12 13h8v6h-8z" fill="#fff" stroke="#6c99c4" stroke-width="1.500"/></symbol>
  <symbol id="lock" viewBox="0 0 24 24"><path d="M6 12V7c0-7 12-7 12 0v5" fill="none" stroke="#777" stroke-width="2.500"/><rect x="3" y="11" width="18" height="11" rx="1" fill="#666"/></symbol>
  <symbol id="ext" viewBox="0 0 24 24"><path d="M2 3c3-3 8-2 10 2l5 8-7 7-5-5C1 11 0 6 2 3z" fill="#ddd" stroke="#222" stroke-width="1.500"/><path d="M4 9l8-6M6 13l8-6M9 16l6-6M4 3l9 13" stroke="#222" stroke-width="1.700"/><path d="M11 18c2-5 9-5 12-1-2 6-9 7-12 1zM16 8l7-5" fill="#eee" stroke="#333" stroke-width="1.500"/><circle cx="17" cy="18.500" r="2" fill="#222"/></symbol>
  <symbol id="crs" viewBox="0 0 24 24"><path d="M1 11c3-9 19-9 22 0l-11 12z" fill="#aaa" stroke="#777"/><path d="M1 11h22M4 7h16M5 15h14M12 4v19M12 4c-6 5-6 13 0 19M12 4c6 5 6 13 0 19" fill="none" stroke="#666" stroke-width="1.100"/></symbol>
  <symbol id="chat" viewBox="0 0 24 24"><path d="M9 2h6c6 0 8 4 8 8 0 3-2 6-4 7l2 6-7-4H9c-6 0-8-4-8-9 0-4 2-8 8-8z" fill="#656565"/><path d="M6 10.500h3M11 10.500h3M16 10.500h3" stroke="#fff" stroke-width="2.500"/></symbol>
  <symbol id="find" viewBox="0 0 24 24"><circle cx="10" cy="10" r="7" fill="none" stroke="#888" stroke-width="2"/><path d="M15 15l7 7" stroke="#888" stroke-width="2.200"/></symbol>
  <symbol id="float" viewBox="0 0 12 12"><rect x=".5" y=".5" width="10" height="10" rx="1.500" fill="none" stroke="#777"/><path d="M5 2.500h3.500V6H5zM2.500 5H6v3.500H2.500z" fill="none" stroke="#666" stroke-width=".9"/></symbol>
  <symbol id="close" viewBox="0 0 12 12"><rect x=".5" y=".5" width="10" height="10" rx="1.500" fill="none" stroke="#777"/><path d="M3 3l5 5M8 3L3 8" stroke="#555" stroke-width="1.800"/></symbol>
</svg>

<header class="titlebar"><span class="app-title">*aggregate.qgs - QGIS</span>
  <div class="winbtns dim"><i><svg viewBox="0 0 16 16"><path d="M4 8h8"/></svg></i><i><svg viewBox="0 0 16 16"><path d="M4.500 4.500h7v7h-7z"/></svg></i><i><svg viewBox="0 0 16 16"><path d="M5 5l6 6M11 5l-6 6"/></svg></i></div>
</header>

<nav class="menu">
  <span>Pro<u>j</u>ekt</span><span><u>S</u>zerkesztés</span><span><u>N</u>ézet</span><span><u>R</u>éteg</span><span><u>B</u>eállítások</span><span><u>M</u>odulok</span><span><u>V</u>ektor</span><span><u>R</u>aszter</span><span>Adatbázis</span><span>Web</span><span><u>H</u>áló</span><span><u>F</u>eldolgozás</span><span><u>S</u>úgó</span>
</nav>

<div class="bar">
  <i class="grip first"></i>
  <b><svg><use href="#new"/></svg></b><b><svg><use href="#open"/></svg></b><b><svg><use href="#floppy"/></svg></b><b><svg><use href="#layout"/></svg></b><b><svg><use href="#lman"/></svg></b><b><svg><use href="#style"/></svg></b>
  <i class="grip"></i>
  <b><svg><use href="#hand"/></svg></b><b><svg><use href="#pan"/></svg></b><b class="on"><svg><use href="#zin"/></svg></b><b><svg><use href="#zout"/></svg></b><b><svg><use href="#zfull"/></svg></b><b><svg><use href="#zsel"/></svg></b><b><svg><use href="#zlay"/></svg></b><b class="off"><svg viewBox="0 0 24 24"><use href="#zlay"/><text x="8.500" y="12.500" font-size="9" font-weight="bold" fill="#333" textLength="13">1:1</text></svg></b><b><svg><use href="#zprev"/></svg></b><b class="off"><svg><use href="#znext"/></svg></b><b><svg><use href="#mapnew"/></svg></b><b><svg><use href="#bmnew"/></svg></b><b><svg><use href="#bm"/></svg></b><b><svg><use href="#refresh"/></svg></b>
  <i class="grip short"></i>
  <b><svg><use href="#ident"/></svg></b><b><svg><use href="#action"/></svg></b><i class="dd"></i><b><svg><use href="#select"/></svg></b><i class="dd"></i><b><svg><use href="#selexp"/></svg></b><i class="dd"></i><b><svg><use href="#desel"/></svg></b><b><svg><use href="#table"/></svg></b><b><svg><use href="#abacus"/></svg></b><b><svg><use href="#gear"/></svg></b><b><svg><use href="#sigma"/></svg></b><b><svg><use href="#meas"/></svg></b><i class="dd"></i><b class="on"><svg><use href="#tips"/></svg></b><b><svg><use href="#annot"/></svg></b><i class="dd"></i>
</div>

<div class="bar">
  <i class="grip first"></i>
  <b><svg><use href="#dsm"/></svg></b><b><svg><use href="#gpkgn"/></svg></b><b><svg><use href="#vecn"/></svg></b><b><svg><use href="#feathern"/></svg></b><b><svg><use href="#chip"/></svg></b><i class="sep"></i><b><svg><use href="#virtn"/></svg></b>
  <i class="grip"></i>
  <b class="sub"><svg><use href="#edits"/></svg></b><b class="on"><svg><use href="#pencil"/></svg></b><b><svg><use href="#savee"/></svg></b><b><svg><use href="#addpol"/></svg></b><b><svg><use href="#vtool"/></svg></b><i class="dd"></i><b class="off"><svg><use href="#modat"/></svg></b><b class="off"><svg><use href="#bin"/></svg></b><b class="off"><svg><use href="#cut"/></svg></b><b class="off"><svg><use href="#copy"/></svg></b><b class="off"><svg><use href="#paste"/></svg></b><b><svg><use href="#undo"/></svg></b><b class="off"><svg><use href="#redo"/></svg></b>
  <i class="grip short"></i>
  <b class="on"><svg><use href="#magnet"/></svg></b><b class="sub"><svg><use href="#topo"/></svg></b><b class="sub"><svg><use href="#eye"/></svg></b><b class="on"><svg><use href="#snapa"/></svg></b><b><svg><use href="#snapx"/></svg></b><b><svg><use href="#snapt"/></svg></b><i class="dd"></i>
  <div class="bar-end"><i class="grip"></i><i class="grip"></i><b class="sub"><svg><use href="#wms"/></svg></b><span class="more">»</span><i class="grip"></i><b><svg><use href="#help"/></svg></b></div>
</div>

<div class="bar last">
  <i class="grip first"></i>
  <b class="off"><svg><use href="#cad"/></svg></b><b><svg><use href="#movef"/></svg></b><i class="dd"></i><b><svg><use href="#rotf"/></svg></b><b><svg><use href="#simp"/></svg></b><b><svg><use href="#ringn"/></svg></b><b><svg><use href="#partn"/></svg></b><b><svg><use href="#filln"/></svg></b><b><svg><use href="#ringx"/></svg></b><b><svg><use href="#partx"/></svg></b><b><svg><use href="#reshape"/></svg></b><b><svg><use href="#offset"/></svg></b><b class="off"><svg><use href="#revl"/></svg></b><b><svg><use href="#trim"/></svg></b><b><svg><use href="#splf"/></svg></b><b><svg><use href="#splp"/></svg></b><b class="off"><svg><use href="#mrg"/></svg></b><b class="off"><svg><use href="#mrga"/></svg></b><b class="off"><svg><use href="#rots"/></svg></b><i class="dd pale"></i>
  <i class="grip"></i>
  <b><svg><use href="#python"/></svg></b><b><svg><use href="#man"/></svg></b><b><svg><use href="#hammer"/></svg></b><b><svg><use href="#grq"/></svg></b><b><svg><use href="#reload"/></svg></b><i class="dd"></i><b><svg><use href="#xxii"/></svg></b>
  <i class="grip"></i><b><svg><use href="#country"/></svg></b><i class="grip"></i><b><svg><use href="#stack"/></svg></b>
</div>

<main class="main">
  <aside class="side">
    <i class="hgrip"></i>
    <div><svg><use href="#vecp"/></svg></div><div><svg><use href="#raster"/></svg></div><div><svg><use href="#mesh"/></svg></div><div><svg><use href="#comma"/></svg></div><div><svg><use href="#featherp"/></svg></div><div><svg><use href="#virtp"/></svg></div><div><svg><use href="#pgp"/></svg><i class="dd"></i></div><div><svg><use href="#globep"/></svg><i class="dd"></i></div><div><svg><use href="#wcs"/></svg></div><div><svg><use href="#wfs"/></svg><i class="dd"></i></div><div><svg><use href="#vecn"/></svg><i class="dd"></i></div>
  </aside>

  <section class="dock">
    <div class="dock-title"><span>Böngésző</span><svg><use href="#float"/></svg><svg><use href="#close"/></svg></div>
    <div class="dock-tools"><b><svg><use href="#addl"/></svg></b><b><svg><use href="#refresh"/></svg></b><b><svg><use href="#filter"/></svg></b><b><svg><use href="#coll"/></svg></b><b><svg><use href="#info"/></svg></b></div>
    <div class="browser">
      <div class="browser-top">
        <ul class="tree">
          <li class="leaf"><svg><use href="#star"/></svg>Kedvencek</li>
          <li><svg><use href="#bm"/></svg>Térbeli könyvjelzők</li>
          <li><svg><use href="#projd"/></svg>Projekt könyvtár</li>
          <li><svg><use href="#home"/></svg>Saját könyvtár</li>
          <li><svg><use href="#folder"/></svg>/</li>
          <li class="leaf"><svg><use href="#gpkg"/></svg>GeoPackage</li>
          <li class="leaf"><svg><use href="#feather"/></svg>SpatiaLite</li>
          <li><svg><use href="#pg"/></svg>PostGIS</li>
          <li class="leaf"><svg><use href="#sail"/></svg>MSSQL</li>
          <li class="leaf"><svg viewBox="0 0 16 16"><rect width="16" height="16" rx="2" fill="#6490c6"/><text x="1.500" y="10.800" font-size="7" fill="#dce8f5" textLength="13">DB2</text></svg>DB2</li>
          <li><svg><use href="#globe"/></svg>WMS/WMTS</li>
        </ul>
        <div class="vscroll"><i class="up"></i><i class="thumb"></i><i class="track"></i><i class="down"></i></div>
      </div>
      <div class="hscroll"><i class="left"></i><i class="thumb"></i><i class="track"></i><i class="right"></i><i class="corner"></i></div>
    </div>
    <div class="splitter"></div>
    <div class="dock-title layers-title"><span>Rétegek</span><svg><use href="#float"/></svg><svg><use href="#close"/></svg></div>
    <div class="dock-tools layers-tools"><b><svg><use href="#brush"/></svg></b><b><svg><use href="#grp"/></svg></b><b class="sub"><svg><use href="#eye"/></svg></b><b><svg><use href="#filter"/></svg></b><b><svg><use href="#epsf"/></svg></b><i class="dd"></i><b><svg><use href="#expd"/></svg></b><b><svg><use href="#coll"/></svg></b><b><svg><use href="#reml"/></svg></b></div>
    <ul class="layers">
      <li class="leaf lay"><i class="chk"></i><i class="dot"></i>pnt</li>
      <li class="lay"><i class="chk"></i><svg><use href="#lnico"/></svg>ln</li>
      <li class="lay sel"><i class="chk"></i><svg><use href="#polico"/></svg><u>pol</u></li>
      <li class="cls"><i class="chk"></i><i class="sw c1"></i>1</li>
      <li class="cls"><i class="chk"></i><i class="sw c2"></i>2</li>
      <li class="cls"><i class="chk"></i><i class="sw c3"></i>3</li>
      <li class="cls"><i class="chk"></i><i class="sw c4"></i></li>
    </ul>
    <div class="tabs"><span>Réteg sorrend</span><span class="cur">Rétegek</span></div>
  </section>

  <section class="canvas">
    <svg class="map" viewBox="282 169 885 580">
      <g stroke="#222" stroke-width="1" stroke-linejoin="round">
        <path d="M410 505.500L320.500 618l171 62-.5-145z" fill="#1ed36f"/>
        <path d="M658.200 488l124.500 6.300-13.400 126.400L652 733.500 491.500 680 597.500 611z" fill="#e1df70"/>
        <path d="M320.800 280.500L549 251.500 615.300 424 658.200 488 597.300 611.500 491.300 680 491 535.500 321.700 472z" fill="#ed85b9"/>
        <path d="M615.300 424L491 535.500"/>
      </g>
      <g fill="none">
        <path d="M321.700 472L366 456l107 19 107 37 85.300 29L760 518l-.7-90" stroke="#3a7bc8" stroke-width="2"/>
        <path d="M384 324.500L438 340l109.500 37L553 400l27 112-22 80-103 21-12 82.500" stroke="#d2994f" stroke-width="1.800"/>
        <path d="M531 321l-93 19 170 151 34 136 5 57.500" stroke="#74d47f" stroke-width="3.800"/>
      </g>
      <g font-size="12" fill="#111" text-anchor="middle">
        <text transform="translate(595.500 474.500) rotate(41)">2</text>
        <text transform="translate(545.500 495.500) rotate(18)">4</text>
        <text transform="translate(578.500 487.500) rotate(77)">4</text>
      </g>
      <g fill="#ff9e17" stroke="#392d16" stroke-width="1">
        <circle cx="438" cy="340" r="4"/><circle cx="553" cy="400" r="4"/><circle cx="366" cy="456" r="4"/><circle cx="473" cy="475" r="4"/><circle cx="580" cy="512" r="4"/><circle cx="760" cy="518" r="4"/><circle cx="455" cy="613" r="4"/><circle cx="642" cy="627" r="4"/>
      </g>
    </svg>
  </section>
</main>

<footer class="status">
  <label class="search"><svg><use href="#find"/></svg>Írjon ide a kereséshez (Ctrl+K)</label>
  <span class="clip clip-d"><em>d</em></span>
  <span class="field coord">625563,232497</span>
  <svg class="s-ext"><use href="#ext"/></svg>
  <span class="clip clip-t"><em>t</em></span>
  <span class="field scale">1:491735<i class="dd"></i></span>
  <svg class="s-lock"><use href="#lock"/></svg>
  <span class="clip clip-y"><em>y</em></span>
  <span class="field zoom">100%<i class="spin"></i></span>
  <span class="clip clip-g"><em>g</em></span>
  <span class="field rot">0.0 °<i class="spin"></i></span>
  <i class="chk"></i><span class="render">Megjelenít</span>
  <svg class="s-crs"><use href="#crs"/></svg><span class="epsg">EPSG:23700</span>
  <svg class="s-chat"><use href="#chat"/></svg>
  <i class="resize"></i>
</footer>
<div class="desktop"></div>

<section class="attr">
  <header class="attr-title"><span>pol :: Összes elem: 4, Szűrve: 4, Kiválasztva: 0</span>
    <div class="winbtns"><i><svg viewBox="0 0 16 16"><path d="M4 8h8"/></svg></i><i><svg viewBox="0 0 16 16"><path d="M4.500 4.500h7v7h-7z"/></svg></i><i class="x"><svg viewBox="0 0 16 16"><path d="M5 5l6 6M11 5l-6 6"/></svg></i></div>
  </header>
  <div class="attr-tools">
    <b class="on"><svg><use href="#pencil"/></svg></b><b><svg><use href="#rowed"/></svg></b><b><svg><use href="#savee"/></svg></b><b class="off"><svg><use href="#refresh"/></svg></b><i class="sep"></i>
    <b><svg><use href="#tabn"/></svg></b><b class="off"><svg><use href="#bin"/></svg></b><b class="off"><svg><use href="#cut"/></svg></b><b class="off"><svg><use href="#copy"/></svg></b><b><svg><use href="#paste"/></svg></b><i class="sep"></i>
    <b><svg><use href="#selexp"/></svg></b><b><svg><use href="#rows"/></svg></b><b><svg><use href="#inv"/></svg></b><b><svg><use href="#desel"/></svg></b><b><svg><use href="#filter"/></svg></b><b class="on white"><svg><use href="#top"/></svg></b><b><svg><use href="#pan"/></svg></b><b><svg><use href="#zsel"/></svg></b><i class="sep"></i><b><svg><use href="#coln"/></svg></b><span class="more">»</span>
  </div>
  <div class="attr-calc">
    <span class="btn fld"><small>123</small>id<i class="dd"></i></span><span class="eq">=</span><span class="btn ebtn"><svg viewBox="0 0 17 15"><use href="#eps" width="24" height="24"/></svg></span><span class="combo"><i class="dd"></i></span><span class="btn all">Összes frissítése</span><span class="btn some">Kijelöltek frissítése</span>
  </div>
  <div class="grid-wrap">
    <table class="grid">
      <tr><th class="rh"></th><th class="cid">id<i class="dd"></i></th><th class="cm">pnt_mean</th></tr>
      <tr><th>1</th><td>1</td><td>6.9250000…</td></tr>
      <tr><th>2</th><td>2</td><td>7.5</td></tr>
      <tr><th>3</th><td>3</td><td>4.2</td></tr>
      <tr><th>4</th><td>4</td><td>5.1499999…</td></tr>
    </table>
  </div>
  <div class="attr-foot"><span class="btn show sub"><svg><use href="#filter"/></svg>Show All Features</span><span class="views"><b><svg><use href="#form"/></svg></b><b class="on"><svg><use href="#table"/></svg></b></span></div>
</section>
</body>
</html>
```
FILE: styles.css
```css
* { box-sizing: border-box; }
html, body { margin: 0; height: 100%; }
body { width: 1167px; height: 783px; overflow: hidden; position: relative; display: flex; flex-direction: column; background: #efebe7; color: #111; font: 14.500px/19px "Noto Sans", "Open Sans", sans-serif; letter-spacing: 0; white-space: nowrap; }
.defs { position: absolute; width: 0; height: 0; }
b, i, em, small { font-weight: normal; font-style: normal; }
svg { display: block; flex: none; }
ul { list-style: none; margin: 0; padding: 0; }
u { text-decoration: none; border-bottom: 1.500px solid currentColor; display: inline-block; line-height: 15px; }

.titlebar { height: 29px; flex: none; display: flex; align-items: center; background: linear-gradient(#45443f, #3c3b37); color: #807d78; font-weight: bold; border-radius: 6px 6px 0 0; box-shadow: 0 -8px 0 #2c0a20; }
.app-title { width: 170px; margin-left: 504px; font-size: 14.400px; }
.winbtns { display: flex; gap: 4px; margin-left: auto; }
.winbtns i { width: 16px; height: 16px; border-radius: 50%; background: #7c7a73; box-shadow: 0 0 0 .5px #33322e; }
.winbtns .x { background: #ec5b33; }
.winbtns path { fill: none; stroke: #3b3a36; stroke-width: 1.200; }
.dim { padding-right: 6px; }
.dim i { background: #5e5c57; }

.menu { height: 22px; flex: none; display: flex; align-items: center; background: #f0ece8; border-bottom: 1px solid #d5d1cc; padding-left: 10px; gap: 15.100px; }

.bar { height: 39px; flex: none; display: flex; align-items: center; background: linear-gradient(#f7f4f1, #edeae6); border-bottom: 1px solid #bcb8b4; }
.bar.last { height: 38px; }
.bar b { width: 33px; height: 32px; display: flex; align-items: center; justify-content: center; position: relative; flex: none; }
.bar svg { width: 24px; height: 24px; }
.on { background: #dcd8d5; border: 1px solid #a9a5a1; border-radius: 3px; background-clip: padding-box; }
.on.white { background: #fcfcfb; }
.off svg { opacity: .32; filter: grayscale(.7); }
.dd { width: 12px; height: 12px; flex: none; display: flex; align-items: center; justify-content: center; }
.dd::before { content: ""; border: 4.500px solid transparent; border-top: 5px solid #484644; border-bottom: 0; }
.dd.pale::before { border-top-color: #b9b6b3; }
.sub { position: relative; }
.sub::after { content: ""; position: absolute; right: 4px; bottom: 4px; border: 3px solid transparent; border-top: 3px solid #333; border-bottom: 0; }
.grip { width: 16.300px; height: 17px; flex: none; background: conic-gradient(from 270deg at 1px 1px, #b9b5b1 90deg, transparent 0) 0 0 / 2px 3px content-box; background-origin: content-box; padding: 0 3px 0 8px; }
.grip.first { width: 12.500px; padding: 0 3px 0 5px; }
.grip.short { width: 15.500px; }
.sep { width: 7.500px; height: 20px; flex: none; background: linear-gradient(#cfcbc7, #cfcbc7) 3px 0 / 1px 100% no-repeat; }
.more { font-weight: bold; font-size: 14.500px; }
.bar-end { display: flex; align-items: center; margin-left: auto; padding-right: 3.500px; }
.bar-end .more { width: 12px; margin-left: 1px; }

.main { flex: 1; min-height: 0; display: flex; border-top: 1px solid #b5b1ad; }
.side { width: 51px; flex: none; background: linear-gradient(90deg, #f7f4f1, #eeebe7); border-right: 1px solid #bcb8b4; padding-top: 5px; }
.side div { height: 32.200px; display: flex; align-items: center; padding-left: 8px; gap: 3px; }
.side svg { width: 24px; height: 24px; }
.hgrip { display: block; width: 17px; height: 5px; margin: 0 0 1px 18px; background: conic-gradient(from 270deg at 1px 1px, #b9b5b1 90deg, transparent 0) 0 0 / 3px 2px; }

.dock { width: 230px; flex: none; padding: 0 6px 0 1px; display: flex; flex-direction: column; }
.dock-title { height: 20px; flex: none; display: flex; align-items: center; padding: 0 1px 1px 4px; gap: 2px; }
.dock-title span { flex: 1; }
.dock-title svg { width: 12px; height: 12px; }
.dock-tools { height: 30px; flex: none; display: flex; align-items: center; padding: 0 0 2px 3px; }
.dock-tools b { width: 25px; display: flex; justify-content: center; }
.dock-tools svg { width: 16px; height: 16px; }
.dock-tools .sub::after { right: 2px; bottom: -1px; }
.browser { height: 218px; flex: none; border: 1px solid #b5b1ad; background: #fff; display: flex; flex-direction: column; }
.browser-top { height: 202px; display: flex; }
.tree { flex: 1; overflow: hidden; }
.tree li { height: 19px; display: flex; align-items: center; gap: 6.500px; }
.tree li::before, .lay::before { content: ""; width: 16px; flex: none; height: 8px; background: #444; clip-path: polygon(7px 0, 12px 4px, 7px 8px); }
.tree li.leaf::before, .lay.leaf::before { background: none; }
.tree svg { width: 16px; height: 16px; }
.vscroll { width: 14px; display: flex; flex-direction: column; border-left: 1px solid #b5b1ad; }
.vscroll i, .hscroll i { display: flex; align-items: center; justify-content: center; background: #f6f4f2; }
.vscroll .up, .vscroll .down { height: 14px; }
.vscroll .up::before { content: ""; border: 4px solid transparent; border-bottom: 5px solid #555; border-top: 0; }
.vscroll .down::before { content: ""; border: 4px solid transparent; border-top: 5px solid #555; border-bottom: 0; }
.vscroll .thumb { height: 98px; border: solid #b5b1ad; border-width: 1px 0; }
.vscroll .track { flex: 1; background: #dfdcd9; border-bottom: 1px solid #b5b1ad; }
.hscroll { height: 14px; display: flex; border-top: 1px solid #b5b1ad; }
.hscroll .left, .hscroll .right { width: 14px; }
.hscroll .left::before { content: ""; border: 4px solid transparent; border-right: 5px solid #555; border-left: 0; }
.hscroll .right::before { content: ""; border: 4px solid transparent; border-left: 5px solid #555; border-right: 0; }
.hscroll .thumb { flex: 1; border: solid #b5b1ad; border-width: 0 1px; }
.hscroll .track { width: 11px; background: #dfdcd9; border-right: 1px solid #b5b1ad; }
.hscroll .corner { width: 14px; background: #efebe7; border-left: 1px solid #b5b1ad; }
.splitter { height: 6px; flex: none; background: conic-gradient(from 270deg at 1px 1px, #b9b5b1 90deg, transparent 0) 104px 1px / 3px 2px; clip-path: inset(1px 102px 1px 104px); }
.layers { height: 229px; flex: none; border: 1px solid #b5b1ad; background: #fff; }
.lay { height: 19px; display: flex; align-items: center; font-weight: bold; font-size: 14px; border-right: 4px solid #ececea; }
.lay svg { width: 16px; height: 16px; margin: 0 6px 0 6px; }
.lay .chk { margin-left: 7px; }
.dot { width: 7px; height: 7px; border-radius: 50%; background: #ff9e17; border: 1px solid #9c7440; margin: 0 11px 0 10px; }
.sel { background: #308cc6; color: #fff; box-shadow: inset -1px 0 #308cc6; }
.lay.sel::before { background: #16394f; clip-path: polygon(5px 2px, 15px 2px, 10px 7px); }
.chk { width: 14px; height: 14px; flex: none; background: #fff; border: 1px solid #aaa6a2; display: block; }
.chk::before { content: ""; display: block; width: 12px; height: 12px; background: #111; clip-path: polygon(2px 5px, 4px 5px, 5px 8px, 8px 2px, 10px 1px, 6px 10px, 4px 10px); }
.cls { height: 20px; display: flex; align-items: center; padding-left: 43px; }
.sw { width: 18px; height: 18px; border: 1px solid #444; margin: 0 6px 0 6px; }
.c1 { background: #1ed36f; border-color: #117a40; }
.c2 { background: #e1df70; border-color: #7e7c40; }
.c3 { background: #ed85b9; border-color: #854a68; }
.c4 { background: #4346ea; border-color: #26287f; }
.tabs { display: flex; align-items: flex-start; height: 28px; flex: none; padding-top: 1px; }
.tabs span { height: 25px; border: 1px solid #aaa6a2; background: #dcd8d4; border-radius: 0 0 3px 3px; display: flex; align-items: center; width: 123px; padding-left: 11px; }
.tabs .cur { width: 80px; height: 27px; background: #f8f6f4; border-left: 0; border-top: 0; padding-left: 11px; }

.canvas { flex: 1; border: solid #b5b1ad; border-width: 1px 0 1px 1px; background: #fff; min-width: 0; }
.map { width: 885px; height: 580px; }

.status { height: 31px; flex: none; display: flex; align-items: center; font-size: 12.500px; letter-spacing: -.2px; }
.search { width: 358px; height: 25px; margin-left: 4px; border: 1px solid #aaa6a2; border-radius: 3px; background: #fff; color: #8d8c8a; font-size: 14.500px; display: flex; align-items: center; padding-left: 8px; gap: 8px; letter-spacing: 0; }
.search svg { width: 12px; height: 12px; }
.field { height: 24px; border: 1px solid #aaa6a2; border-radius: 3px; background: #fff; display: flex; align-items: center; padding-left: 7px; flex: none; }
.clip { overflow: hidden; display: flex; justify-content: flex-end; flex: none; }
.clip-d { width: 4px; margin: 0 3px 0 57px; }
.coord { width: 103px; }
.s-ext { width: 17px; height: 17px; margin-left: 3px; }
.clip-t { width: 5px; margin: 0 3px 0 12px; }
.scale { width: 92px; padding-left: 4px; }
.field .dd { width: 19px; height: 22px; margin-left: auto; border-left: 1px solid #b5b1ad; background: #f8f6f4; }
.s-lock { width: 16px; height: 17px; margin-left: 10px; }
.clip-y { width: 5px; margin: 0 3px 0 6px; }
.zoom { width: 98px; padding-left: 5px; }
.spin { width: 13px; height: 22px; margin-left: auto; border-left: 1px solid #b5b1ad; display: flex; flex-direction: column; align-items: center; justify-content: center; gap: 6px; background: #f8f6f4; }
.spin::before { content: ""; border: 4px solid transparent; border-bottom: 4px solid #555; border-top: 0; }
.spin::after { content: ""; border: 4px solid transparent; border-top: 4px solid #555; border-bottom: 0; }
.clip-g { width: 4px; margin: 0 10px 0 8px; }
.rot { width: 94px; padding-left: 4px; }
.status .chk { margin: 0 5px 0 6px; }
.render { width: 75px; font-size: 12.200px; }
.s-crs, .s-chat { width: 17px; height: 17px; }
.epsg { width: 84px; margin-left: 4px; font-size: 12.300px; letter-spacing: -.3px; }
.resize { width: 12px; height: 12px; margin: 14px 0 0 auto; background: conic-gradient(from 270deg at 1px 1px, #b9b5b1 90deg, transparent 0) 0 0 / 3px 3px; clip-path: polygon(100% 0, 100% 100%, 0 100%); }
.desktop { height: 2px; flex: none; background: linear-gradient(90deg, #2c0a20, #7b1238 50%, #a32628); }

.attr { position: absolute; left: 662px; top: 170px; width: 504px; height: 265px; background: #efebe7; border-radius: 6px 6px 0 0; box-shadow: 0 3px 12px 2px rgba(0, 0, 0, .5); display: flex; flex-direction: column; }
.attr-title { height: 30px; flex: none; border-radius: 6px 6px 0 0; background: linear-gradient(#58564f, #3d3c38); color: #dfdbd2; font-weight: bold; display: flex; align-items: center; padding: 0 6px 0 94px; font-size: 14.400px; letter-spacing: .03px; }
.attr-tools { height: 30px; flex: none; display: flex; align-items: center; padding-left: 4px; }
.attr-tools b, .views b { width: 24px; height: 24px; margin-right: 1px; flex: none; display: flex; align-items: center; justify-content: center; }
.attr-tools svg, .views svg { width: 16px; height: 16px; }
.attr-tools .sep { width: 7px; height: 12px; }
.attr-tools .more { margin-left: 15px; }
.attr-calc { height: 30px; flex: none; display: flex; align-items: center; padding: 0 0 1px 3px; border-bottom: 1px solid #b5b1ad; }
.btn { height: 25px; border: 1px solid #aaa6a2; border-radius: 3px; background: linear-gradient(#fbfaf9, #efecea); display: flex; align-items: center; justify-content: center; flex: none; }
.fld { width: 62px; }
.fld small { font-size: 9px; font-weight: bold; color: #555; margin: -4px 3px 0 0; }
.fld .dd { margin-left: 7px; }
.eq { width: 15px; text-align: center; }
.ebtn { width: 24px; }
.ebtn svg { width: 13px; height: 12px; }
.combo { width: 117px; height: 25px; margin: 0 4px 0 6px; border: 1px solid #aaa6a2; border-radius: 3px; background: #fff; display: flex; justify-content: flex-end; }
.combo .dd { width: 20px; height: 23px; border-left: 1px solid #b5b1ad; }
.all { width: 127px; margin-right: 3px; }
.some { width: 144px; color: #bbb8b5; border-color: #c9c5c1; letter-spacing: .1px; }
.grid-wrap { height: 145px; flex: none; background: linear-gradient(#efebe7 22px, #fff 22px); border: solid #b5b1ad; border-width: 0 1px 1px; }
.grid { border-collapse: separate; border-spacing: 0; table-layout: fixed; width: 213px; }
.grid th, .grid td { padding: 0; font-weight: normal; height: 30px; border: solid #b9b5b1; border-width: 0 1px 1px 0; }
.grid td { text-align: right; padding-right: 3px; background: #fff; letter-spacing: .3px; }
.grid tr:nth-child(odd) td { background: #f5f4f3; }
.grid tr:first-child th { height: 22px; background: linear-gradient(#f9f7f5, #efebe8); line-height: 19px; }
.grid th { background: #f2efec; }
.rh { width: 13px; border-right: 0 !important; }
.cid { width: 100px; }
.cid .dd { float: right; margin: 4px 3px 0 -15px; }
.cm { width: 100px; }
.attr-foot { flex: 1; display: flex; align-items: center; justify-content: space-between; padding: 0 2px 0 3px; }
.show { width: 156px; gap: 4px; padding-right: 4px; }
.show svg { width: 15px; height: 15px; }
.show.sub::after { right: 1px; bottom: 3px; }
.views { display: flex; }
```
